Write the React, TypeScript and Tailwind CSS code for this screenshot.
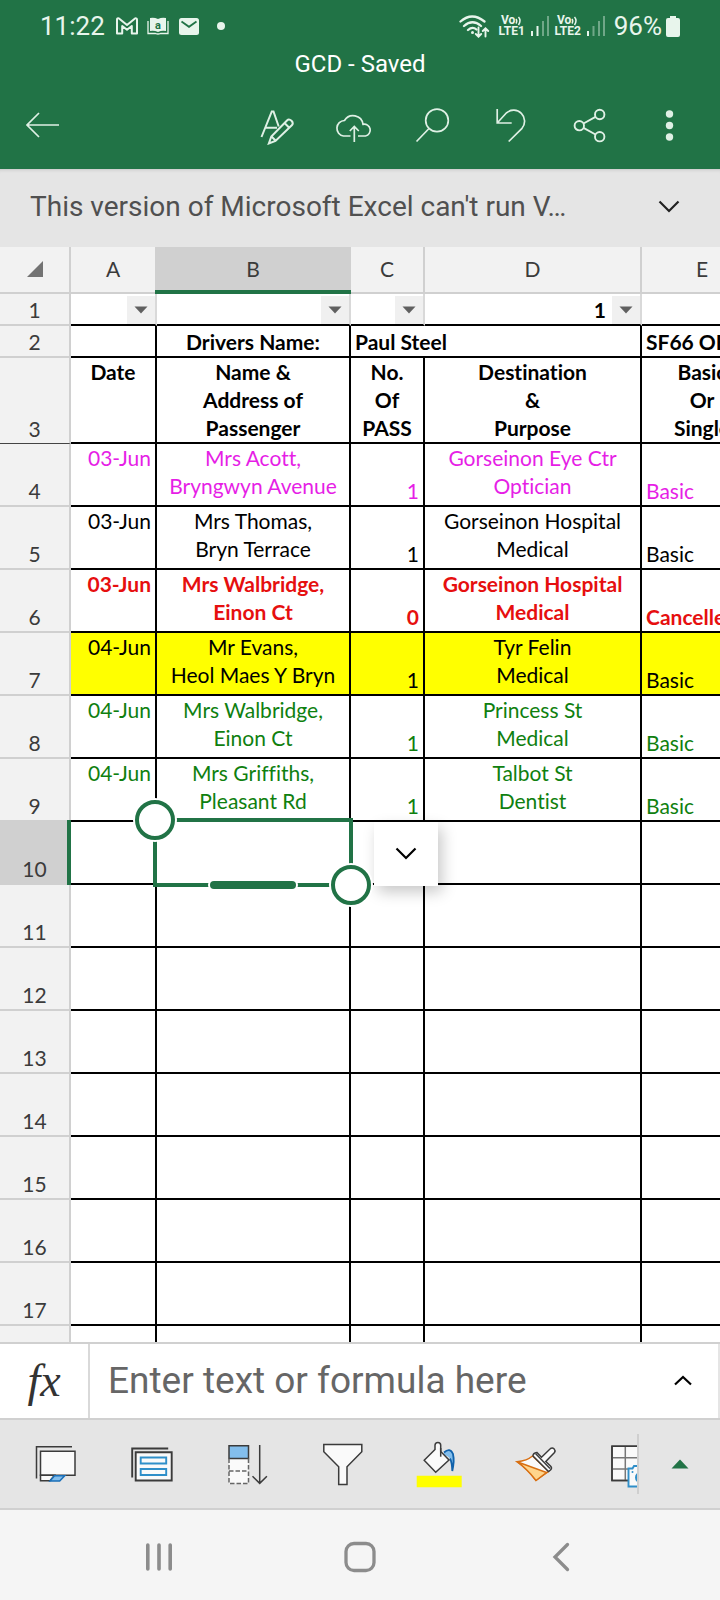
import { useState } from "react";

type Entry = {
  row: number;
  date: string;
  name: string;
  pass: string;
  dest: string;
  type: string;
  style: string;
};

const entries: Entry[] = [
  { row: 4, date: "03-Jun", name: "Mrs Acott,\nBryngwyn Avenue", pass: "1", dest: "Gorseinon Eye Ctr\nOptician", type: "Basic", style: "text-[#e61ee6]" },
  { row: 5, date: "03-Jun", name: "Mrs Thomas,\nBryn Terrace", pass: "1", dest: "Gorseinon Hospital\nMedical", type: "Basic", style: "text-black" },
  { row: 6, date: "03-Jun", name: "Mrs Walbridge,\nEinon Ct", pass: "0", dest: "Gorseinon Hospital\nMedical", type: "Cancelled", style: "text-[#e60f0f] font-bold" },
  { row: 7, date: "04-Jun", name: "Mr Evans,\nHeol Maes Y Bryn", pass: "1", dest: "Tyr Felin\nMedical", type: "Basic", style: "text-black bg-[#ffff00]" },
  { row: 8, date: "04-Jun", name: "Mrs Walbridge,\nEinon Ct", pass: "1", dest: "Princess St\nMedical", type: "Basic", style: "text-[#0f800f]" },
  { row: 9, date: "04-Jun", name: "Mrs Griffiths,\nPleasant Rd", pass: "1", dest: "Talbot St\nDentist", type: "Basic", style: "text-[#0f800f]" },
];

// the last row only peeks out above the formula bar, so it has no number
const emptyRows = ["11", "12", "13", "14", "15", "16", "17", ""];

const cell = "border-r-2 border-b-2 border-black p-0 px-1 whitespace-pre";
const rowHead = "border-r-2 border-b-2 border-[#d0d0d0] bg-[#f2f2f2] p-0 align-bottom text-center font-normal text-[#3b3b3b]";

function StatusBar() {
  return (
    <div className="flex h-12 items-center justify-between px-10 pt-1 text-[26px] leading-none text-[#e8f5ec]">
      <div className="flex items-center">
        <span>11:22</span>
        <svg className="ml-2.5" width="24" height="18" viewBox="0 0 24 18" fill="none" stroke="currentColor" strokeWidth="2" strokeLinejoin="round">
          <path d="M2 2.500Q2 1 4 1.400L12 8l8-6.600Q22 1 22 2.800V16.500h-5.200V9L12 12.800 7.200 9v7.500H2z" />
        </svg>
        <svg className="ml-2" width="22" height="18" viewBox="0 0 22 18">
          <path d="M3 1q4-1 8 1 4-2 8-1v13q-4-1-8 1-4-2-8-1z" fill="currentColor" />
          <path d="M1 4v12.500h7.500q2.500 1 5 0H21V4" fill="none" stroke="currentColor" strokeWidth="1.300" />
          <text x="11" y="12" textAnchor="middle" fontSize="11" fontWeight="700" fill="#217346">a</text>
        </svg>
        <svg className="ml-2.5" width="20" height="17" viewBox="0 0 20 17">
          <rect width="20" height="17" rx="2.500" fill="currentColor" />
          <path d="M2.500 3.500 10 8.800l7.500-5.300" fill="none" stroke="#217346" strokeWidth="1.800" />
        </svg>
        <span className="ml-[18px] h-2 w-2 rounded-full bg-current" />
      </div>
      <div className="flex items-center">
        <svg className="mr-2" width="31" height="24" viewBox="0 0 31 24" fill="none" stroke="currentColor" strokeWidth="2.300" strokeLinecap="round">
          <path d="M1.500 7.500q11.500-10 24 0M5 12q8.500-7.500 17 0M9 16q4.500-4 8.500-.5" />
          <circle cx="13.500" cy="18.500" r="1.500" fill="currentColor" stroke="none" />
          <path d="M19.500 13.500v9M16.800 20l2.700 2.700 2.700-2.700M26.500 22.500v-8M23.800 17l2.700-2.700 2.700 2.700" strokeWidth="1.900" />
        </svg>
        <VoLte label="LTE1" />
        <Signal strong />
        <VoLte label="LTE2" />
        <Signal />
        <span className="ml-1">96%</span>
        <svg className="ml-1" width="14" height="21" viewBox="0 0 14 21" fill="currentColor">
          <path d="M4 0h6v2h2q2 0 2 2v15q0 2-2 2H2q-2 0-2-2V4q0-2 2-2h2z" />
        </svg>
      </div>
    </div>
  );
}

function VoLte({ label }: { label: string }) {
  return (
    <div className="flex w-7 flex-col items-center text-[12px] leading-[11px] font-bold">
      <span className="flex items-center">
        Vo
        <svg width="7" height="10" viewBox="0 0 7 10" fill="none" stroke="currentColor" strokeWidth="1.500">
          <path d="M1 3q1.500 2 0 4.500M3.500 1q3 3.500 0 8" />
        </svg>
      </span>
      <span>{label}</span>
    </div>
  );
}

function Signal({ strong }: { strong?: boolean }) {
  return (
    <svg className="mx-1" width="20" height="20" viewBox="0 0 20 20" fill="currentColor">
      <path d="M1 15h2v5H1z" />
      <path d="M6.500 10h2v10h-2z" opacity={strong ? 1 : 0.4} />
      <path d="M12 5h2v15h-2zM17 0h2v20h-2z" opacity="0.4" />
    </svg>
  );
}

function AppBar() {
  const btn = "flex h-full w-[78px] items-center justify-center";
  const svg = { width: 40, height: 40, viewBox: "0 0 40 40", fill: "none", stroke: "currentColor", strokeWidth: 1.7 };
  return (
    <div className="flex h-[89px] items-center justify-between pr-3.5 pl-1 text-[#dff0e5]">
      <button aria-label="Back" className={btn}>
        <svg {...svg}>
          <path d="M36 20H4M16 8 4 20l12 12" />
        </svg>
      </button>
      <div className="flex h-full">
        <button aria-label="Edit" className={btn}>
          <svg {...svg} strokeWidth="2">
            <path d="M4.500 32 14.800 6.500h1.700l5.200 15M8.500 22.700H20" />
            <path d="m11.800 38.500 2.500-7L30 15.500q2-2 4.500.3 2.300 2.300.3 4.500L18.500 36zM14.500 31.500l4 4M27.500 18l4.500 4.500" />
          </svg>
        </button>
        <button aria-label="Upload" className={btn}>
          <svg {...svg}>
            <path d="M15.500 31H8.500a7.800 7.800 0 0 1 1-15.500A10 10 0 0 1 28 19.300 5.900 5.900 0 1 1 30.500 31H23M19.300 37V22M14.800 26l4.500-4.500 4.500 4.500" />
          </svg>
        </button>
        <button aria-label="Search" className={btn}>
          <svg {...svg}>
            <circle cx="24" cy="15.400" r="11.300" />
            <path d="M16 23.500 3.500 36.500" />
          </svg>
        </button>
        <button aria-label="Undo" className={btn}>
          <svg {...svg}>
            <path d="M6.200 4v14h14.500M6.200 18 15.500 7.800A11 11 0 0 1 31 23.300L17.700 36.500" />
          </svg>
        </button>
        <button aria-label="Share" className={btn}>
          <svg {...svg} strokeWidth="1.900">
            <circle cx="10.300" cy="20.700" r="4.700" />
            <circle cx="30.700" cy="9.500" r="4.700" />
            <circle cx="30.700" cy="31.700" r="4.700" />
            <path d="m14.500 18.500 12-6.700M14.500 22.800l12 6.700" />
          </svg>
        </button>
        <button aria-label="More options" className={btn}>
          <svg {...svg} fill="currentColor" stroke="none">
            <circle cx="22.500" cy="9" r="3.700" />
            <circle cx="22.500" cy="20.500" r="3.700" />
            <circle cx="22.500" cy="32" r="3.700" />
          </svg>
        </button>
      </div>
    </div>
  );
}

function Chevron({ up }: { up?: boolean }) {
  return (
    <svg width="22" height="14" viewBox="0 0 22 14" fill="none" stroke="currentColor" strokeWidth="2.200">
      <path d={up ? "M3 10.500 11 3l8 7.500" : "M1.500 1.500 11 11l9.500-9.500"} />
    </svg>
  );
}

function FilterButton({ col }: { col: string }) {
  return (
    <button aria-label={"Filter column " + col} className="flex h-7 w-7 items-center justify-center bg-[#f0f0f0]">
      <svg width="14" height="8" viewBox="0 0 14 8" fill="#606060">
        <path d="M.5.500h13L7 7.500z" />
      </svg>
    </button>
  );
}

function Selection() {
  return (
    <div className="absolute -inset-1 z-10 border-4 border-[#217346]">
      <span className="absolute -top-[22px] -left-[22px] h-10 w-10 rounded-full border-4 border-[#217346] bg-white ring-2 ring-white" />
      <span className="absolute -right-[22px] -bottom-[22px] h-10 w-10 rounded-full border-4 border-[#217346] bg-white ring-2 ring-white" />
      <span className="absolute -bottom-1.5 left-1/2 h-2 w-[86px] -translate-x-1/2 rounded-full bg-[#217346] ring-2 ring-white" />
    </div>
  );
}

function Sheet() {
  const head = "border-r-2 border-b-2 border-[#d0d0d0] bg-[#f2f2f2] p-0 pb-0.5 font-normal text-[#3b3b3b]";
  const filterCell = "border-r-2 border-b-2 border-r-[#d9d9d9] border-b-black p-0 align-bottom";
  return (
    <div className="min-h-0 flex-1 overflow-hidden bg-white">
      <table className="w-[764px] table-fixed border-separate border-spacing-0 font-[Lato,sans-serif] text-[21px] leading-7 [font-variant-ligatures:none]">
        <colgroup>
          <col className="w-[71px]" />
          <col className="w-[86px]" />
          <col className="w-[194px]" />
          <col className="w-[74px]" />
          <col className="w-[217px]" />
          <col className="w-[122px]" />
        </colgroup>
        <thead>
          <tr className="h-[47px]">
            <th className={head}>
              <svg className="ml-[27px]" width="16" height="16" viewBox="0 0 16 16" fill="#737373">
                <path d="M16 0v16H0z" />
              </svg>
            </th>
            <th className={head}>A</th>
            <th className="relative border-r-2 border-b-2 border-[#d0d0d0] bg-[#d0d0d0] p-0 pb-0.5 font-normal text-[#3b3b3b]">
              B
              <span className="absolute -right-0.5 -bottom-0.5 -left-0.5 h-1 bg-[#217346]" />
            </th>
            <th className={head}>C</th>
            <th className={head}>D</th>
            <th className={head}>E</th>
          </tr>
        </thead>
        <tbody className="text-black">
          <tr className="h-8">
            <th className={rowHead}>1</th>
            <td className={filterCell}>
              <div className="flex justify-end"><FilterButton col="A" /></div>
            </td>
            <td className={filterCell}>
              <div className="flex justify-end"><FilterButton col="B" /></div>
            </td>
            <td className={filterCell}>
              <div className="flex justify-end"><FilterButton col="C" /></div>
            </td>
            <td className={filterCell}>
              <div className="flex justify-end gap-1.5 font-bold">1 <FilterButton col="D" /></div>
            </td>
            <td className={filterCell} />
          </tr>
          <tr className="h-8 align-bottom font-bold">
            <th className={rowHead}>2</th>
            <td className={cell} />
            <td className={cell + " text-center"}>Drivers Name:</td>
            <td colSpan={2} className={cell}>Paul Steel</td>
            <td className={cell}>SF66 OEK</td>
          </tr>
          <tr className="h-[86px] text-center align-top font-bold">
            <th className="border-r-2 border-b border-r-[#d0d0d0] border-b-[#444] bg-[#f2f2f2] p-0 align-bottom font-normal text-[#3b3b3b]">3</th>
            <td className={cell}>Date</td>
            <td className={cell}>{"Name &\nAddress of\nPassenger"}</td>
            <td className={cell}>{"No.\nOf\nPASS"}</td>
            <td className={cell}>{"Destination\n&\nPurpose"}</td>
            <td className={cell}>{"Basic\nOr\nSingle"}</td>
          </tr>
          {entries.map((e) => (
            <tr key={e.row} className={"h-[63px] " + e.style}>
              <th className={rowHead}>{e.row}</th>
              <td className={cell + " text-right align-top"}>{e.date}</td>
              <td className={cell + " text-center align-top"}>{e.name}</td>
              <td className={cell + " text-right align-bottom"}>{e.pass}</td>
              <td className={cell + " text-center align-top"}>{e.dest}</td>
              <td className={cell + " align-bottom"}>{e.type}</td>
            </tr>
          ))}
          <tr className="h-[63px]">
            <th className="relative border-r-2 border-b-2 border-[#d0d0d0] bg-[#d0d0d0] p-0 align-bottom font-normal text-[#3b3b3b]">
              10
              <span className="absolute -top-0.5 -right-0.5 -bottom-0.5 w-1 bg-[#217346]" />
            </th>
            <td className={cell} />
            <td className={cell + " relative"}>
              <Selection />
            </td>
            <td className={cell + " relative"}>
              <button aria-label="Cell menu" className="absolute top-0 left-[23px] flex h-16 w-16 items-center justify-center bg-white shadow-[4px_6px_14px_rgba(0,0,0,0.22)]">
                <Chevron />
              </button>
            </td>
            <td className={cell} />
            <td className={cell} />
          </tr>
          {emptyRows.map((n) => (
            <tr key={n} className="h-[63px]">
              <th className={rowHead}>{n}</th>
              <td className={cell} />
              <td className={cell} />
              <td className={cell} />
              <td className={cell} />
              <td className={cell} />
            </tr>
          ))}
        </tbody>
      </table>
    </div>
  );
}

function FormulaBar() {
  const [formula, setFormula] = useState("");
  return (
    <div className="flex h-[78px] shrink-0 border-y-2 border-[#d0d0d0] bg-white">
      <label htmlFor="formula" className="flex w-[90px] shrink-0 items-center justify-center border-r-2 border-[#d9d9d9] font-[Liberation_Serif,serif] text-[46px] leading-none text-[#333] italic">
        fx
      </label>
      <input
        id="formula"
        className="min-w-0 flex-1 pl-[18px] text-[37px] text-[#444] outline-none placeholder:text-[#666]"
        placeholder="Enter text or formula here"
        value={formula}
        onChange={(e) => setFormula(e.target.value)}
      />
      <button aria-label="Expand formula bar" className="flex w-[72px] items-center justify-center border-r-2 border-[#e5e5e5] text-black">
        <Chevron up />
      </button>
    </div>
  );
}

function ToolBar() {
  const btn = "flex w-24 shrink-0 items-center justify-center";
  const svg = { width: 48, height: 48, viewBox: "0 0 48 48", fill: "none", stroke: "#3b3b3b", strokeWidth: 1.5 };
  return (
    <div className="flex h-[90px] shrink-0 border-b-2 border-[#d0d0d0] bg-[#e5e5e5]">
      <div className="flex min-w-0 flex-1 overflow-hidden pl-2">
        <button aria-label="Format sheet" className={btn}>
          <svg {...svg}>
            <path d="M4.500 38.500V6.700H40" />
            <path d="M8.500 11.200H43v24H8.500z" fill="#fafafa" />
            <path d="M8.500 35.300v5.400H18l4.500-5.400z" fill="#fafafa" />
            <path d="M22.500 35.800h10.200l-5 5.200H18z" fill="#83beec" stroke="#1a6fb8" />
          </svg>
        </button>
        <button aria-label="Card view" className={btn}>
          <svg {...svg}>
            <path d="M4.200 37.500V8.500h36" strokeWidth="1.900" />
            <path d="M7.700 12.300h36v28.200h-36z" fill="#fafafa" strokeWidth="1.900" />
            <path d="M12.700 17.500h25.500v6H12.700zM12.700 29h25.500v6H12.700z" stroke="#2f8fc9" fill="#fafafa" strokeWidth="1.900" />
          </svg>
        </button>
        <button aria-label="Sort down" className={btn}>
          <svg {...svg}>
            <path d="M5 18.500h19.500v25H5z" fill="#fafafa" stroke="none" />
            <path d="M5 5.700h19.500v12.800H5z" fill="#83beec" />
            <path d="M5 18.500v25h19.500v-25M5 31h19.500" strokeDasharray="4.500 2" stroke="#666" />
            <path d="M35.700 5v38.500M28.500 36.200l7.200 7.200 7.200-7.200" />
          </svg>
        </button>
        <button aria-label="Filter" className={btn}>
          <svg {...svg}>
            <path d="M3.800 4.500h38v7.200L27 26.700v17.800h-8.300V26.700L3.800 11.700z" fill="#fafafa" />
          </svg>
        </button>
        <button aria-label="Fill colour" className={btn}>
          <svg {...svg}>
            <path d="M.7 35.700h45v11.500H.7z" fill="#ffff00" stroke="none" />
            <path d="M28 12q6-5 9.500 1.500 2.500 7.500-1.200 17.500-.6-12-3.300-13.500-2-2.500-5-2z" fill="#83beec" stroke="none" />
            <path d="M28 12.500q6-5.500 9 1.500 1.500 7.500-.7 17-.3-9-2.300-12.500" stroke="#1162ab" strokeWidth="1.800" />
            <path d="M19 9.500 8.200 20.300l11.500 12L33 20 24.700 11.500V5.300q0-2.800-2.800-2.800T19 5.300z" fill="#fafafa" />
            <path d="M24.700 8v8.700" />
          </svg>
        </button>
        <button aria-label="Format painter" className={btn}>
          <svg {...svg}>
            <path d="M5 21.700q10-1 15.500-5.700l16 15.300-12.500 9Q15 28 5 21.700z" fill="#fafafa" stroke="#d86f12" />
            <path d="m5 21.700 29.500 10.800-10.500 8Q15 29 5 21.700z" fill="#ffd58c" stroke="#d86f12" />
            <path d="M21 16q0-3 4-3.500l4.500 4.700 9-8.700q2-1 3.700.5 1.500 1.700.3 3.500l-8.700 9 4.700 4.500q2 2 0 4l-2 1.500z" fill="#fafafa" />
            <path d="m23.500 13.500 14.500 15" />
          </svg>
        </button>
        <button aria-label="Data from picture" className={btn}>
          <svg {...svg}>
            <path d="M4 6.300h40v34.200H4z" fill="#fafafa" />
            <path d="M4 17.700h40M4 29h40M17.300 6.300v34.200M30.500 6.300v34.200" stroke="#777" />
            <path d="M4 6.300h40v34.200H4z" />
            <path d="M20.500 28.500h4l1.500-2.500h9l2 2.500h7v18H20.500z" fill="#fafafa" stroke="#2f8fc9" strokeWidth="1.900" />
            <circle cx="32.500" cy="37.500" r="4.500" stroke="#2f8fc9" strokeWidth="2" />
            <circle cx="24.500" cy="32" r="1" fill="#2f8fc9" stroke="none" />
          </svg>
        </button>
      </div>
      <div className="flex w-[83px] items-center">
        <span className="h-15 w-0.5 bg-[#cfcfcf]" />
        <button aria-label="Show ribbon" className="flex h-full flex-1 items-center justify-center">
          <svg width="18" height="10" viewBox="0 0 18 10" fill="#217346">
            <path d="M9 .5 17.500 9.500H.5z" />
          </svg>
        </button>
      </div>
    </div>
  );
}

function NavBar() {
  const svg = { width: 36, height: 36, viewBox: "0 0 36 36", fill: "none", stroke: "#8c8c8c", strokeLinecap: "round" as const };
  return (
    <nav className="grid h-[90px] shrink-0 grid-cols-3 items-center bg-[#f5f5f5] px-[58px] pt-1">
      <button aria-label="Recents" className="flex justify-center">
        <svg {...svg} strokeWidth="3.600">
          <path d="M6.800 6v24M18 6v24M29.200 6v24" />
        </svg>
      </button>
      <button aria-label="Home" className="flex justify-center">
        <svg {...svg} strokeWidth="3.300">
          <rect x="4" y="4.500" width="28" height="27" rx="8" />
        </svg>
      </button>
      <button aria-label="Back" className="flex justify-center">
        <svg {...svg} strokeWidth="3.300">
          <path d="M24.500 5.500 12 18l12.500 12.500" />
        </svg>
      </button>
    </nav>
  );
}

export default function App() {
  return (
    <div className="flex h-screen flex-col overflow-hidden bg-white font-[Roboto,sans-serif]">
      <header className="shrink-0 bg-[#217346]">
        <StatusBar />
        <h1 className="text-center text-[24px] leading-8 text-white">GCD - Saved</h1>
        <AppBar />
      </header>
      <div className="flex h-[78px] shrink-0 items-center justify-between bg-[#e5e5e5] pr-10 pb-0.5 pl-[30px] shadow-[inset_0_4px_4px_-4px_rgba(0,0,0,0.2)]">
        <p className="text-[28px] text-[#505050]">This version of Microsoft Excel can't run V…</p>
        <button aria-label="Show message" className="text-[#222]">
          <Chevron />
        </button>
      </div>
      <Sheet />
      <FormulaBar />
      <ToolBar />
      <NavBar />
    </div>
  );
}
